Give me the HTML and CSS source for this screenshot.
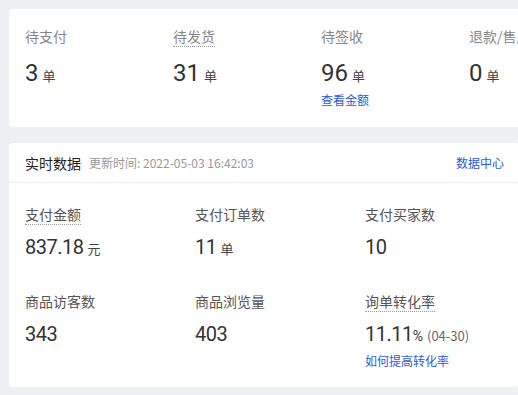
FILE: index.html
```html
<!DOCTYPE HTML>
<html lang="zh-CN">
  <head>
    <meta charset="utf-8" />
    <meta name="viewport" content="width=device-width, initial-scale=1.0" />
    <link rel="stylesheet" href="styles.css">
  </head>
  <body>
    <section class="card orders">
      <div class="order">
        <div class="label">待支付</div>
        <div class="value">3<span class="unit">单</span></div>
      </div>
      <div class="order">
        <div class="label tip">待发货</div>
        <div class="value">31<span class="unit">单</span></div>
      </div>
      <div class="order">
        <div class="label">待签收</div>
        <div class="value">96<span class="unit">单</span></div>
        <a class="link" href="#">查看金额</a>
      </div>
      <div class="order">
        <div class="label">退款/售后</div>
        <div class="value">0<span class="unit">单</span></div>
      </div>
    </section>

    <section class="card realtime">
      <div class="realtime-head">
        <span class="title">实时数据</span>
        <span class="updated">更新时间: 2022-05-03 16:42:03</span>
        <a class="link more" href="#">数据中心</a>
      </div>
      <div class="stats">
        <div class="stat">
          <div class="label tip">支付金额</div>
          <div class="value">837.18<span class="unit">元</span></div>
        </div>
        <div class="stat">
          <div class="label">支付订单数</div>
          <div class="value">11<span class="unit">单</span></div>
        </div>
        <div class="stat">
          <div class="label">支付买家数</div>
          <div class="value">10</div>
        </div>
        <div class="stat">
          <div class="label">商品访客数</div>
          <div class="value">343</div>
        </div>
        <div class="stat">
          <div class="label">商品浏览量</div>
          <div class="value">403</div>
        </div>
        <div class="stat">
          <div class="label tip">询单转化率</div>
          <div class="value">11.11<span class="pct">%</span><span class="date">(04-30)</span></div>
          <a class="link" href="#">如何提高转化率</a>
        </div>
      </div>
    </section>
  </body>
</html>
```

FILE: styles.css
```css
html, body {
  margin: 0;
  overflow: hidden;
}
body {
  background-color: #eff0f3;
  padding: 9px 0 0 9px;
  font-family: "Noto Sans CJK SC", "Noto Sans", sans-serif;
  color: #333333;
}
a {
  text-decoration: none;
}

.card {
  background-color: #ffffff;
  border-radius: 4px;
  box-sizing: border-box;
}

.label {
  display: block;
  width: fit-content;
  font-size: 14px;
  line-height: 16px;
  padding-bottom: 2px;
  border-bottom: 1px solid transparent;
  color: #666666;
  white-space: nowrap;
}
.label.tip {
  border-bottom: 1px dotted #999999;
}
.value {
  font-family: Roboto, "Noto Sans CJK SC", sans-serif;
  color: #333333;
  white-space: nowrap;
}
.unit {
  font-family: "Noto Sans CJK SC", sans-serif;
  font-size: 13px;
  line-height: 1;
  letter-spacing: 0;
  margin-left: 4px;
  color: #444444;
}
.link {
  display: block;
  font-size: 12px;
  line-height: 16px;
  color: #2b5bd7;
}

/* 订单 */
.orders {
  width: 640px;
  height: 118px;
  display: flex;
  padding: 19px 0 0 16px;
}
.order {
  width: 148px;
  flex: none;
}
.order .label {
  color: #888888;
}
.order .value {
  font-size: 24px;
  line-height: 28px;
  margin-top: 12px;
}
.order .link {
  margin-top: 5px;
}

/* 实时数据 */
.realtime {
  width: 510px;
  height: 244px;
  margin-top: 16px;
}
.realtime-head {
  display: flex;
  align-items: center;
  height: 39px;
  padding: 0 15px 0 16px;
  border-bottom: 1px solid #ebedf0;
  line-height: 16px;
}
.realtime-head .title {
  font-size: 14px;
  color: #222222;
}
.realtime-head .updated {
  font-size: 12px;
  color: #999999;
  margin-left: 8px;
}
.realtime-head .more {
  margin-left: auto;
}
.stats {
  display: grid;
  grid-template-columns: 170px 170px 150px;
  row-gap: 34px;
  padding: 23px 0 0 16px;
}
.stat .label {
  color: #555555;
}
.stat .value {
  font-size: 20px;
  line-height: 24px;
  letter-spacing: -0.5px;
  margin-top: 10px;
}
.stat .pct {
  font-size: 14px;
  line-height: 1;
  letter-spacing: 0;
}
.stat .date {
  font-family: "Noto Sans CJK SC", sans-serif;
  font-size: 13px;
  line-height: 1;
  letter-spacing: 0;
  color: #666666;
  margin-left: 4px;
}
.stat .link {
  margin-top: 7px;
}
```
